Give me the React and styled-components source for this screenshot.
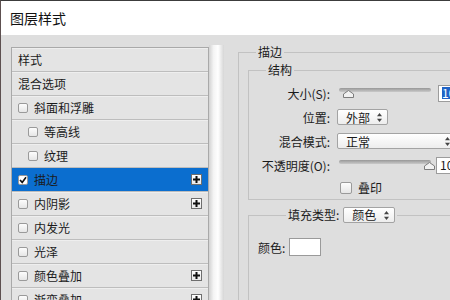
import React from "react";
import styled, { createGlobalStyle } from "styled-components";

const GlobalStyle = createGlobalStyle`
  html, body { margin: 0; padding: 0; }
  body {
    width: 450px;
    height: 300px;
    overflow: hidden;
    background: #dedede;
    font-family: "Noto Sans CJK SC", "Microsoft YaHei", sans-serif;
    font-size: 12px;
    color: #1b1b1b;
  }
`;

const Window = styled.div`
  width: 450px;
  height: 300px;
  box-sizing: border-box;
  overflow: hidden;
  border-top: 1px solid #3c3c3c;
  border-left: 1px solid #5d5050;
  background: #dedede;
  display: flex;
  flex-direction: column;
`;

const TitleBar = styled.div`
  flex: none;
  height: 34px;
  background: #fff;
  display: flex;
  align-items: center;
  padding-left: 9px;
  font-size: 14px;
  color: #111;
`;

const Body = styled.div`
  flex: 1;
  min-height: 0;
  display: flex;
  align-items: flex-start;
  padding: 12px 0 0 10px;
`;

const Sidebar = styled.div`
  flex: none;
  display: flex;
  align-self: stretch;
`;

const StyleList = styled.ul`
  list-style: none;
  margin: 0;
  padding: 0;
  width: 196px;
  border: 1px solid #a9a9a9;
  border-bottom: none;
  background: #e4e4e4;
`;

const Row = styled.li`
  height: 23px;
  display: flex;
  align-items: center;
  gap: 6px;
  padding: 0 5px 0 ${p => (p.$indent ? 16 : 6)}px;
  border-bottom: 1px solid #bdbdbd;
  background: ${p => (p.$active ? "#0b6ecf" : "#e4e4e4")};
  box-shadow: inset 0 1px 0 ${p => (p.$active ? "#0b6ecf" : "#eeeeee")};
  white-space: nowrap;
`;

const ScrollStrip = styled.div`
  width: 15px;
  margin-top: -2px;
  background: linear-gradient(to right, #d2d2d2, #f4f4f4 30%, #ffffff 60%, #d6d6d6);
`;

const Box = styled.span`
  flex: none;
  width: ${p => p.$size}px;
  height: ${p => p.$size}px;
  box-sizing: border-box;
  border: 1px solid #9a9a9a;
  border-radius: 2px;
  background: ${p => (p.$checked ? "#fff" : "linear-gradient(#fdfdfd, #e6e6e6)")};
  display: flex;
  align-items: center;
  justify-content: center;
`;

const PlusButton = styled.span`
  margin-left: auto;
  margin-right: 1px;
  width: 11px;
  height: 11px;
  box-sizing: border-box;
  border: 1px solid #6e6e6e;
  background: linear-gradient(#ffffff, #e9e9e9);
  display: flex;
  align-items: center;
  justify-content: center;
`;

const Main = styled.div`
  flex: none;
  margin: -3px 0 0 14px;
`;

const OuterGroup = styled.fieldset`
  margin: 0;
  min-width: 0;
  width: 240px;
  height: 280px;
  padding: 0 0 0 9px;
  border: 1px solid #c2c2c2;
  border-right: none;
  border-bottom: none;
`;

const Legend = styled.legend`
  margin-left: ${p => p.$offset}px;
  padding: 0 2px;
  line-height: 16px;
  display: flex;
  align-items: center;
  gap: 4px;
`;

const InnerGroup = styled.fieldset`
  margin: ${p => p.$top}px 0 0 0;
  min-width: 0;
  width: 240px;
  min-height: ${p => p.$minH || 0}px;
  padding: 3px 0 1px 2px;
  border: 1px solid #c2c2c2;
  border-right: none;
`;

const FieldGrid = styled.div`
  display: grid;
  grid-template-columns: 79px auto;
  grid-template-rows: repeat(4, 24px) 21px;
  column-gap: 7px;
  align-items: center;
`;

const Label = styled.span`
  text-align: right;
  white-space: nowrap;
`;

const Control = styled.div`
  display: flex;
  align-items: center;
  gap: ${p => p.$gap || 0}px;
  margin-left: ${p => p.$shift || 0}px;
  white-space: nowrap;
`;

const Slider = styled.div`
  position: relative;
  width: 92px;
  height: 10px;
  margin-left: 2px;
`;

const Track = styled.div`
  height: 4px;
  border-radius: 2px;
  background: linear-gradient(#979797, #c9c9c9);
`;

const Thumb = styled.svg`
  position: absolute;
  top: 2px;
`;

const NumberField = styled.div`
  width: 40px;
  height: 17px;
  box-sizing: border-box;
  border: 1px solid #9c9c9c;
  background: #fff;
  padding-left: 3px;
  display: flex;
  align-items: center;
  line-height: 1;
`;

const Selected = styled.span`
  background: #1f63c6;
  color: #fff;
`;

const Select = styled.div`
  width: ${p => p.$w}px;
  height: 16px;
  box-sizing: border-box;
  padding: 0 5px 0 8px;
  border: 1px solid #a3a3a3;
  border-radius: 2px;
  background: linear-gradient(#ffffff, #ededed);
  display: flex;
  align-items: center;
  justify-content: space-between;
  white-space: nowrap;
`;

const ColorRow = styled.div`
  display: flex;
  align-items: center;
  gap: 4px;
  padding: 12px 0 0 7px;
`;

const Swatch = styled.div`
  width: 32px;
  height: 18px;
  box-sizing: border-box;
  border: 1px solid #9a9a9a;
  background: #fff;
`;

const Arrows = () => (
  <svg width="5" height="9" viewBox="0 0 5 9">
    <polygon points="2.5,0 5,3.2 0,3.2" fill="#444" />
    <polygon points="0,5.8 5,5.8 2.5,9" fill="#444" />
  </svg>
);

const Check = () => (
  <svg width="8" height="8" viewBox="0 0 8 8">
    <path d="M1 4 L3.2 6.4 L7 1.2" fill="none" stroke="#111" strokeWidth="1.6" />
  </svg>
);

const Plus = () => (
  <svg width="9" height="9" viewBox="0 0 9 9">
    <path d="M4.5 1 V8 M1 4.5 H8" stroke="#111" strokeWidth="2" />
  </svg>
);

const SliderControl = ({ at }) => (
  <Slider>
    <Track />
    <Thumb width="11" height="8" viewBox="0 0 11 8" style={{ left: at }}>
      <polygon points="5.5,0.5 10.5,4 10.5,7.5 0.5,7.5 0.5,4" fill="#f1f1f1" stroke="#7c7c7c" />
    </Thumb>
  </Slider>
);

const effects = [
  { name: "样式", plain: true },
  { name: "混合选项", plain: true },
  { name: "斜面和浮雕" },
  { name: "等高线", indent: true },
  { name: "纹理", indent: true },
  { name: "描边", active: true, plus: true },
  { name: "内阴影", plus: true },
  { name: "内发光" },
  { name: "光泽" },
  { name: "颜色叠加", plus: true },
  { name: "渐变叠加", plus: true },
];

export default function App() {
  return (
    <>
      <GlobalStyle />
      <Window>
        <TitleBar>图层样式</TitleBar>
        <Body>
          <Sidebar>
            <StyleList>
              {effects.map(e => (
                <Row key={e.name} $indent={e.indent} $active={e.active}>
                  {!e.plain && (
                    <Box $size={10} $checked={e.active}>
                      {e.active && <Check />}
                    </Box>
                  )}
                  <span>{e.name}</span>
                  {e.plus && (
                    <PlusButton>
                      <Plus />
                    </PlusButton>
                  )}
                </Row>
              ))}
            </StyleList>
            <ScrollStrip />
          </Sidebar>
          <Main>
            <OuterGroup>
              <Legend $offset={8}>描边</Legend>
              <InnerGroup $top={2}>
                <Legend $offset={15}>结构</Legend>
                <FieldGrid>
                  <Label>大小(S):</Label>
                  <Control $gap={7}>
                    <SliderControl at={4} />
                    <NumberField>
                      <Selected>10</Selected>
                    </NumberField>
                  </Control>
                  <Label>位置:</Label>
                  <Control>
                    <Select $w={51}>
                      外部 <Arrows />
                    </Select>
                  </Control>
                  <Label>混合模式:</Label>
                  <Control>
                    <Select $w={119}>
                      正常 <Arrows />
                    </Select>
                  </Control>
                  <Label>不透明度(O):</Label>
                  <Control $gap={5}>
                    <SliderControl at={85} />
                    <NumberField>10</NumberField>
                  </Control>
                  <span />
                  <Control $gap={6} $shift={3}>
                    <Box $size={12} />
                    叠印
                  </Control>
                </FieldGrid>
              </InnerGroup>
              <InnerGroup $top={7} $minH={120}>
                <Legend $offset={35}>
                  填充类型:
                  <Select $w={52}>
                    颜色 <Arrows />
                  </Select>
                </Legend>
                <ColorRow>
                  颜色:
                  <Swatch />
                </ColorRow>
              </InnerGroup>
            </OuterGroup>
          </Main>
        </Body>
      </Window>
    </>
  );
}
